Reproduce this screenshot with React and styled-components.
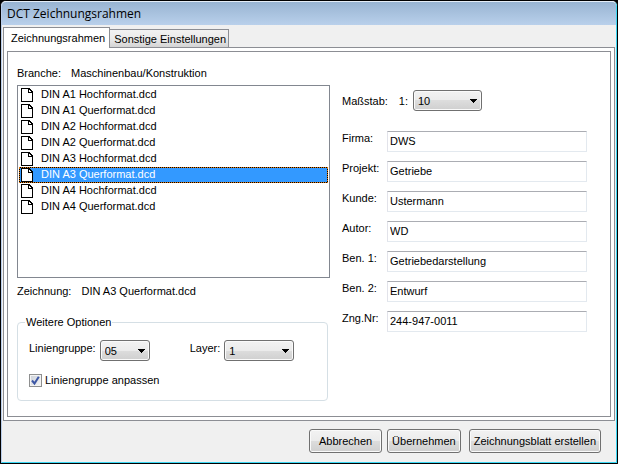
import React, { useState } from 'react';
import styled, { createGlobalStyle, ThemeProvider } from 'styled-components';

const theme = {
  colors: {
    face: '#f0f0f0',
    text: '#000000',
    line: '#8c8e94',
    highlight: '#3399ff',
    group: '#d5dfe5',
    button: '#707070',
  },
  fonts: {
    title: '"Open Sans", "Noto Sans", sans-serif',
    body: '"Liberation Sans", Arial, sans-serif',
  },
};

const GlobalStyle = createGlobalStyle`
  *, *::before, *::after {
    box-sizing: border-box;
  }
  body {
    margin: 0;
    background: #000;
  }
  button, input, select {
    font: inherit;
    color: inherit;
  }
`;

const Window = styled.div`
  display: flex;
  flex-direction: column;
  min-height: 100vh;
  border: 1px solid #000;
  border-radius: 6px 6px 0 0;
  background: ${props => props.theme.colors.face};
  color: ${props => props.theme.colors.text};
  font: 11px/14px ${props => props.theme.fonts.body};
`;
const Frame = styled.div`
  display: flex;
  flex-direction: column;
  flex: 1;
  border: 1px solid #3cd8f4;
  border-top-color: #e4edf7;
  border-left-color: #b9cdea;
  border-radius: 5px 5px 0 0;
`;
const TitleBar = styled.header`
  height: 23px;
  padding-left: 5px;
  border-radius: 4px 4px 0 0;
  background: linear-gradient(#98b4d2, #b9d0eb);
`;
const Title = styled.h1`
  margin: 0;
  font: 12px/23px ${props => props.theme.fonts.title};
`;

const TabBar = styled.div`
  display: flex;
  align-items: flex-end;
  height: 22px;
  padding: 0 1px;
`;
const Tab = styled.button`
  position: relative;
  height: ${props => (props.$active ? 21 : 18)}px;
  padding: ${props => (props.$active ? '0 4px 0 7px' : '0 2px 0 4px')};
  border: 1px solid ${props => props.theme.colors.line};
  border-bottom: none;
  border-left-width: ${props => (props.$active ? 1 : 0)}px;
  margin-bottom: ${props => (props.$active ? -1 : 0)}px;
  background: ${props => (props.$active ? '#fff' : 'linear-gradient(#f2f2f2, #ebebeb 50%, #d4d4d4)')};
  white-space: nowrap;
`;
const TabPanel = styled.main`
  display: flex;
  flex: 1;
  margin: 0 1px;
  padding: 3px;
  border: 1px solid ${props => props.theme.colors.line};
  background: #fff;
`;
const Sheet = styled.div`
  display: grid;
  grid-template-columns: 313fr 245fr;
  column-gap: 12px;
  flex: 1;
  padding: 14px 23px 14px 9px;
  border: 1px solid ${props => props.theme.colors.line};
`;

const Column = styled.div`
  display: flex;
  flex-direction: column;
  min-width: 0;
`;
const Info = styled.div`
  display: flex;
  gap: 10px;
`;
const FileList = styled.ul`
  flex: 1;
  min-height: 130px;
  margin: 5px 0 6px;
  padding: 1px;
  border: 1px solid #828790;
  list-style: none;
`;
const FileRow = styled.li`
  display: flex;
  gap: 8px;
  height: 16px;
  padding-left: 2px;
  cursor: default;
  color: ${props => (props.$selected ? '#fff' : 'inherit')};
  background: ${props => (props.$selected ? props.theme.colors.highlight : 'none')};
  box-shadow: ${props => (props.$selected ? 'inset 0 0 0 1px #000' : 'none')};
  outline: ${props => (props.$selected ? '1px dotted #e07b10' : 'none')};
  outline-offset: -1px;

  svg {
    margin-top: 1px;
  }
`;

const Group = styled.fieldset`
  min-width: 0;
  margin: 17px 2px 1px 0;
  padding: 11px 12px 13px 11px;
  border: 1px solid ${props => props.theme.colors.group};
  border-radius: 4px;
`;
const Legend = styled.legend`
  margin-left: -4px;
  padding: 0 1px;
`;
const OptionRow = styled.div`
  display: flex;
  gap: 40px;
`;
const Option = styled.div`
  display: flex;
  gap: 4px;
`;
const OptionLabel = styled.label`
  padding-top: 1px;
`;

const SelectBox = styled.div`
  position: relative;
  width: ${props => props.$width}px;
  height: 21px;
`;
const NativeSelect = styled.select`
  appearance: none;
  display: block;
  width: 100%;
  height: 100%;
  padding: 0 18px 0 4px;
  border: 1px solid ${props => props.theme.colors.button};
  border-radius: 3px;
  background: linear-gradient(#f2f2f2, #ebebeb 50%, #dddddd 50%, #cfcfcf);
  box-shadow: inset 0 0 0 1px #fafafa;
`;
const Arrow = styled.svg`
  position: absolute;
  top: 9px;
  right: 5px;
  pointer-events: none;
`;

const CheckRow = styled.label`
  display: flex;
  align-items: center;
  gap: 3px;
  height: 14px;
  margin-top: 12px;
`;
const CheckBox = styled.span`
  position: relative;
  width: 13px;
  height: 13px;
`;
const CheckInput = styled.input`
  appearance: none;
  display: block;
  width: 13px;
  height: 13px;
  margin: 0;
  border: 1px solid #8e8f8f;
  background: linear-gradient(135deg, #cbd0d8, #f6f6f6);
  box-shadow: inset 0 0 0 1px #f4f4f4;

  & + svg {
    display: none;
  }
  &:checked + svg {
    display: block;
  }
`;
const CheckMark = styled.svg`
  position: absolute;
  top: 0;
  left: 0;
  pointer-events: none;
`;

const ScaleRow = styled.div`
  display: flex;
  align-items: center;
  gap: 6px;
  margin: 24px 0 20px;
`;
const ScaleLabel = styled.label`
  display: flex;
  gap: 11px;
  width: 65px;
`;
const Fields = styled.div`
  display: flex;
  flex-direction: column;
  gap: 9px;
`;
const Field = styled.div`
  display: grid;
  grid-template-columns: 45px 1fr;
`;
const TextInput = styled.input`
  min-width: 0;
  height: 21px;
  padding: 0 2px 1px;
  border: 1px solid #e3e9ef;
  border-top-color: #abadb3;
  border-left-color: #e2e3ea;
  background: #fff;
  outline: none;
`;

const Footer = styled.footer`
  display: flex;
  justify-content: flex-end;
  gap: 5px;
  padding: 8px 15px 9px;
`;
const Button = styled.button`
  min-width: 73px;
  height: 24px;
  padding: 0 4px;
  margin-left: ${props => (props.$primary ? 3 : 0)}px;
  border: 1px solid ${props => props.theme.colors.button};
  border-radius: 3px;
  background: linear-gradient(#f2f2f2, #ebebeb 50%, #dddddd 50%, #cfcfcf);
  box-shadow: inset 0 0 0 1px #fafafa;
  white-space: nowrap;
`;

const FILES = [
  'DIN A1 Hochformat.dcd',
  'DIN A1 Querformat.dcd',
  'DIN A2 Hochformat.dcd',
  'DIN A2 Querformat.dcd',
  'DIN A3 Hochformat.dcd',
  'DIN A3 Querformat.dcd',
  'DIN A4 Hochformat.dcd',
  'DIN A4 Querformat.dcd',
];

const FIELDS = [
  { id: 'firma', label: 'Firma:', value: 'DWS' },
  { id: 'projekt', label: 'Projekt:', value: 'Getriebe' },
  { id: 'kunde', label: 'Kunde:', value: 'Ustermann' },
  { id: 'autor', label: 'Autor:', value: 'WD' },
  { id: 'ben1', label: 'Ben. 1:', value: 'Getriebedarstellung' },
  { id: 'ben2', label: 'Ben. 2:', value: 'Entwurf' },
  { id: 'zngnr', label: 'Zng.Nr:', value: '244-947-0011' },
];

const PageIcon = () => (
  <svg width="12" height="14" viewBox="0 0 12 14" shapeRendering="crispEdges" aria-hidden="true">
    <path d="M0 0H8L12 4V14H0Z" fill="#000" />
    <path d="M1 1H7V5H11V13H1Z" fill="#fff" />
    <path d="M8 2H9V3H10V4H8Z" fill="#fff" />
  </svg>
);

const Select = ({ id, width, options }) => (
  <SelectBox $width={width}>
    <NativeSelect id={id} defaultValue={options[0]}>
      {options.map(option => (
        <option key={option}>{option}</option>
      ))}
    </NativeSelect>
    <Arrow width="7" height="4" viewBox="0 0 7 4" shapeRendering="crispEdges" aria-hidden="true">
      <path d="M0 0H7V1H6V2H5V3H4V4H3V3H2V2H1V1H0Z" />
    </Arrow>
  </SelectBox>
);

export default function App() {
  const [selected, setSelected] = useState(FILES[5]);

  return (
    <ThemeProvider theme={theme}>
      <GlobalStyle />
      <Window>
        <Frame>
          <TitleBar>
            <Title>DCT Zeichnungsrahmen</Title>
          </TitleBar>
          <TabBar role="tablist">
            <Tab type="button" role="tab" aria-selected="true" $active>Zeichnungsrahmen</Tab>
            <Tab type="button" role="tab" aria-selected="false">Sonstige Einstellungen</Tab>
          </TabBar>
          <TabPanel role="tabpanel">
            <Sheet>
              <Column>
                <Info>
                  <span>Branche:</span>
                  <span>Maschinenbau/Konstruktion</span>
                </Info>
                <FileList role="listbox" aria-label="Zeichnungsrahmen">
                  {FILES.map(file => (
                    <FileRow
                      key={file}
                      role="option"
                      aria-selected={file === selected}
                      $selected={file === selected}
                      onClick={() => setSelected(file)}
                    >
                      <PageIcon />
                      {file}
                    </FileRow>
                  ))}
                </FileList>
                <Info>
                  <span>Zeichnung:</span>
                  <span>{selected}</span>
                </Info>
                <Group>
                  <Legend>Weitere Optionen</Legend>
                  <OptionRow>
                    <Option>
                      <OptionLabel htmlFor="liniengruppe">Liniengruppe:</OptionLabel>
                      <Select id="liniengruppe" width={50} options={['05', '07']} />
                    </Option>
                    <Option>
                      <OptionLabel htmlFor="layer">Layer:</OptionLabel>
                      <Select id="layer" width={70} options={['1', '2', '3']} />
                    </Option>
                  </OptionRow>
                  <CheckRow>
                    <CheckBox>
                      <CheckInput type="checkbox" defaultChecked />
                      <CheckMark width="13" height="13" viewBox="0 0 13 13" aria-hidden="true">
                        <path d="M3 6.5L5.5 9.5L9.8 2.8" fill="none" stroke="#3d57a5" strokeWidth="2" />
                      </CheckMark>
                    </CheckBox>
                    Liniengruppe anpassen
                  </CheckRow>
                </Group>
              </Column>
              <Column>
                <ScaleRow>
                  <ScaleLabel htmlFor="massstab">
                    <span>Maßstab:</span>
                    <span>1:</span>
                  </ScaleLabel>
                  <Select id="massstab" width={69} options={['10', '20', '50']} />
                </ScaleRow>
                <Fields>
                  {FIELDS.map(field => (
                    <Field key={field.id}>
                      <label htmlFor={field.id}>{field.label}</label>
                      <TextInput id={field.id} type="text" defaultValue={field.value} />
                    </Field>
                  ))}
                </Fields>
              </Column>
            </Sheet>
          </TabPanel>
          <Footer>
            <Button type="button">Abbrechen</Button>
            <Button type="button">Übernehmen</Button>
            <Button type="button" $primary>Zeichnungsblatt erstellen</Button>
          </Footer>
        </Frame>
      </Window>
    </ThemeProvider>
  );
}
